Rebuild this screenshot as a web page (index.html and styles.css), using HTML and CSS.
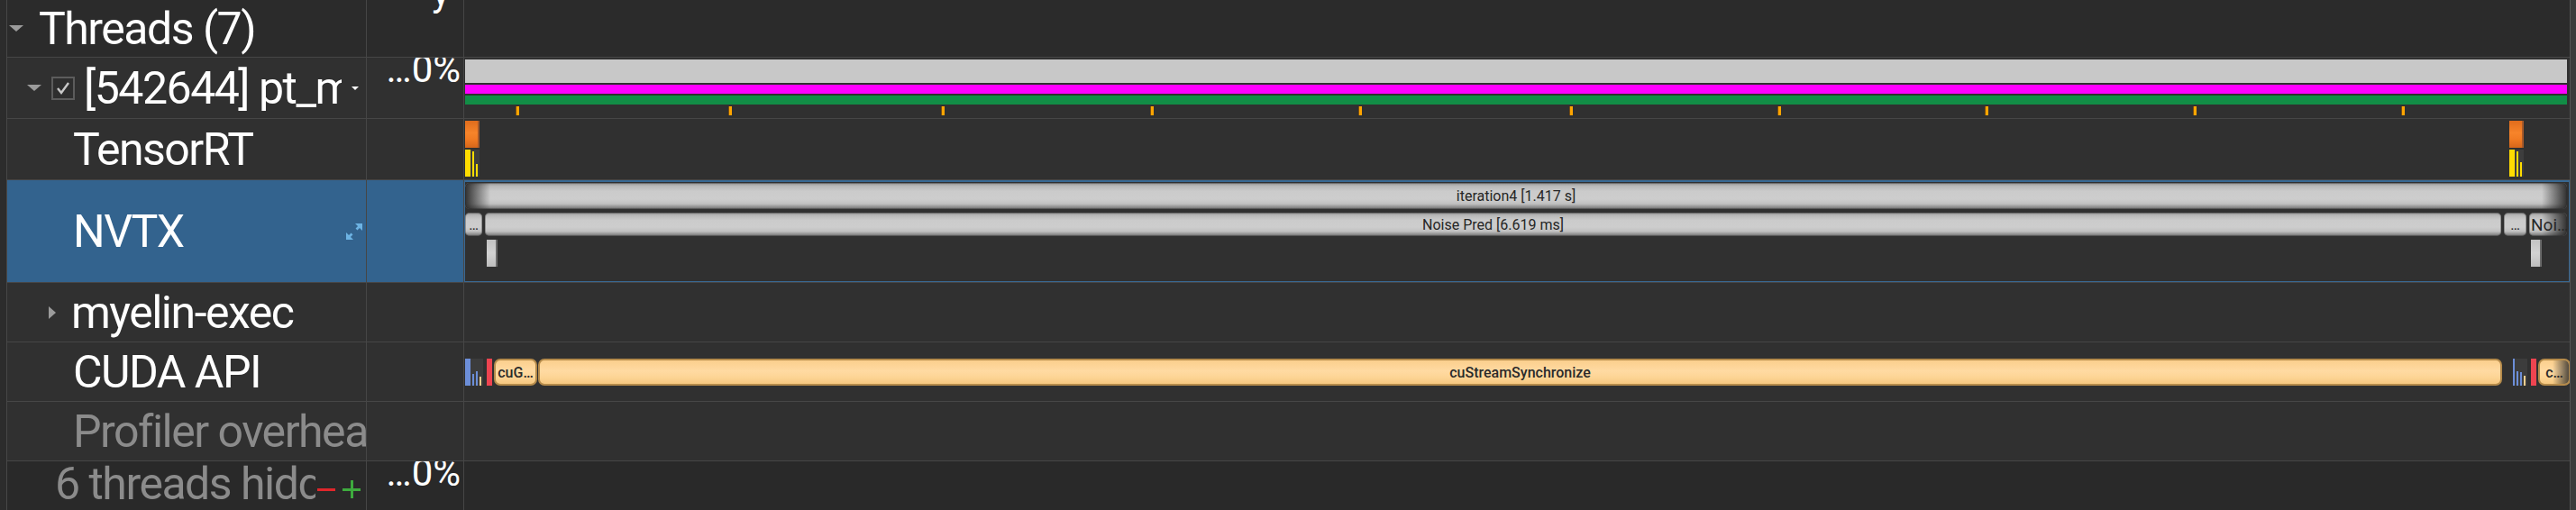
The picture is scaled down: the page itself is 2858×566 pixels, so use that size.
FILE: index.html
```html
<!DOCTYPE html>
<html>
<head>
<meta charset="utf-8">
<link rel="stylesheet" href="styles.css">
</head>
<body>
<div class="app">
  <div class="gutter"></div>
  <div class="table">

    <div class="row r-threads">
      <div class="name pad-threads"><span class="tri-down"></span><span class="label">Threads (7)</span></div>
      <div class="val"><span class="pct pct-y">y</span></div>
      <div class="tl"></div>
    </div>

    <div class="row r-pt">
      <div class="name pad-pt">
        <span class="tri-down"></span>
        <span class="check"><svg width="22" height="22" viewBox="0 0 22 22"><polyline points="5,11 9,16 17,5" fill="none" stroke="#c8c8c8" stroke-width="2.4"/></svg></span>
        <span class="label clip-pt">[542644] pt_main_thread</span>
        <span class="drop"></span>
      </div>
      <div class="val"><span class="pct">…0%</span></div>
      <div class="tl tl-pt">
        <div class="solid gray"></div>
        <div class="solid magenta"></div>
        <div class="solid green"></div>
        <div class="lane ticks">
          <span class="tick" style="left:57px"></span>
          <span class="tick" style="left:293px"></span>
          <span class="tick" style="left:529px"></span>
          <span class="tick" style="left:761px"></span>
          <span class="tick" style="left:992px"></span>
          <span class="tick" style="left:1226px"></span>
          <span class="tick" style="left:1457px"></span>
          <span class="tick" style="left:1687px"></span>
          <span class="tick" style="left:1918px"></span>
          <span class="tick" style="left:2149px"></span>
        </div>
      </div>
    </div>

    <div class="row r-trt">
      <div class="name pad-child"><span class="label">TensorRT</span></div>
      <div class="val"></div>
      <div class="tl tl-trt">
        <div class="lane h30">
          <span class="orange" style="left:1px"></span>
          <span class="orange" style="left:2269px"></span>
        </div>
        <div class="lane h30 gap2">
          <span class="ygroup" style="left:1px">
            <span class="yb" style="left:0;width:6px;height:30px"></span>
            <span class="yb" style="left:8px;width:2px;height:28px"></span>
            <span class="yb" style="left:12px;width:2px;height:14px"></span>
          </span>
          <span class="ygroup" style="left:2269px">
            <span class="yb" style="left:0;width:6px;height:30px"></span>
            <span class="yb" style="left:8px;width:2px;height:28px"></span>
            <span class="yb" style="left:12px;width:2px;height:16px"></span>
          </span>
        </div>
      </div>
    </div>

    <div class="row r-nvtx">
      <div class="name pad-child sel">
        <span class="label">NVTX</span>
        <svg class="expand" width="20" height="20" viewBox="0 0 20 20">
          <polygon points="11,1 19,1 19,9" fill="#6db3e3"/>
          <line x1="16" y1="4" x2="12.5" y2="7.5" stroke="#6db3e3" stroke-width="2.6"/>
          <polygon points="1,11 1,19 9,19" fill="#6db3e3"/>
          <line x1="4" y1="16" x2="7.5" y2="12.5" stroke="#6db3e3" stroke-width="2.6"/>
        </svg>
      </div>
      <div class="val sel"></div>
      <div class="tl tl-nvtx">
        <div class="lane h29">
          <span class="gbar fade-l fade-r" style="left:1px;width:2332px">iteration4 [1.417 s]</span>
        </div>
        <div class="lane h26 gap4">
          <span class="gbar" style="left:1px;width:19px">…</span>
          <span class="gbar" style="left:23px;width:2237px">Noise Pred [6.619 ms]</span>
          <span class="gbar" style="left:2263px;width:25px">…</span>
          <span class="gbar big fade-r" style="left:2291px;width:42px">Noi…</span>
        </div>
        <div class="lane h30 gap4">
          <span class="gsmall" style="left:25px"></span>
          <span class="gsmall" style="left:2293px"></span>
        </div>
      </div>
    </div>

    <div class="row r-myelin">
      <div class="name pad-myelin"><span class="tri-right"></span><span class="label">myelin-exec</span></div>
      <div class="val"></div>
      <div class="tl"></div>
    </div>

    <div class="row r-cuda">
      <div class="name pad-child"><span class="label">CUDA API</span></div>
      <div class="val"></div>
      <div class="tl tl-cuda">
        <div class="lane h30">
          <span class="blue" style="left:1px;width:6px"></span>
          <span class="dgroup" style="left:7px;width:14px">
            <span class="bb" style="left:2px;height:13px"></span>
            <span class="bb" style="left:6px;height:16px"></span>
            <span class="bt" style="left:10px;height:10px"></span>
          </span>
          <span class="red" style="left:25px"></span>
          <span class="tbar" style="left:33px;width:48px">cuG…</span>
          <span class="tbar" style="left:82px;width:2179px">cuStreamSynchronize</span>
          <span class="blue" style="left:2273px;width:2px"></span>
          <span class="dgroup" style="left:2275px;width:14px">
            <span class="bb" style="left:2px;height:16px"></span>
            <span class="bb" style="left:6px;height:15px"></span>
            <span class="bt" style="left:10px;height:11px"></span>
          </span>
          <span class="red" style="left:2293px"></span>
          <span class="tbar fade-r2" style="left:2301px;width:36px">c…</span>
        </div>
      </div>
    </div>

    <div class="row r-prof">
      <div class="name pad-child"><span class="label dim clip-prof">Profiler overhead</span></div>
      <div class="val"></div>
      <div class="tl"></div>
    </div>

    <div class="row r-hidden">
      <div class="name pad-hidden">
        <span class="label dim clip-hidden">6 threads hidden</span>
        <span class="minus"></span>
        <span class="plus"></span>
      </div>
      <div class="val"><span class="pct">…0%</span></div>
      <div class="tl"></div>
    </div>

  </div>
  <div class="scrollbar"></div>
</div>
</body>
</html>
```

FILE: styles.css
```css
* { box-sizing: border-box; }

html, body {
  margin: 0;
  padding: 0;
  background: #303030;
  overflow: hidden;
}

.app {
  display: flex;
  width: 2858px;
  height: 566px;
  overflow: hidden;
  font-family: Roboto, "Noto Sans", sans-serif;
}

.gutter {
  width: 8px;
  flex: none;
  background: #2c2c2c;
  border-right: 1px solid #474747;
}

.table {
  flex: 1;
  display: flex;
  flex-direction: column;
}

.scrollbar {
  width: 7px;
  flex: none;
  background: #3b3b3b;
  border-left: 1px solid #555;
}

.row {
  display: grid;
  grid-template-columns: 399px 108px 1fr;
  border-bottom: 1px solid #464646;
  background: #303030;
  flex: none;
}

.r-threads { height: 64px; background: #2b2b2b; }
.r-pt { height: 68px; }
.r-trt { height: 68px; }
.r-nvtx { height: 114px; }
.r-myelin { height: 66px; }
.r-cuda { height: 66px; }
.r-prof { height: 66px; }
.r-hidden { height: 70px; background: #292929; border-bottom: none; }

.name, .val {
  border-right: 1px solid #464646;
  overflow: hidden;
  position: relative;
}

.name {
  display: flex;
  align-items: center;
  white-space: nowrap;
}

.sel { background: #33638e; }

.label {
  color: #ffffff;
  font-size: 50px;
  letter-spacing: -1.5px;
  line-height: 1;
}

.dim { color: #8b8b8b; }

.pad-threads { padding-left: 2px; }
.pad-threads .label { margin-left: 17px; }
.pad-pt { padding-left: 22px; }
.pad-child { padding-left: 73px; }
.pad-myelin { padding-left: 46px; }
.pad-myelin .label { margin-left: 17px; }
.pad-hidden { padding-left: 53px; align-items: flex-start; }

.tri-down {
  width: 0;
  height: 0;
  border-left: 8px solid transparent;
  border-right: 8px solid transparent;
  border-top: 7px solid #9b9b9b;
  flex: none;
}

.tri-right {
  width: 0;
  height: 0;
  border-top: 7px solid transparent;
  border-bottom: 7px solid transparent;
  border-left: 8px solid #9b9b9b;
  flex: none;
}

.check {
  width: 26px;
  height: 26px;
  border: 2px solid #5c5c5c;
  background: #2e2e2e;
  margin-left: 11px;
  margin-right: 10px;
  display: flex;
  align-items: center;
  justify-content: center;
  flex: none;
}

.check svg { display: block; }

.clip-pt {
  width: 286px;
  overflow: hidden;
  flex: none;
}

.drop {
  margin-left: 11px;
  width: 0;
  height: 0;
  border-left: 4px solid transparent;
  border-right: 4px solid transparent;
  border-top: 4px solid #ffffff;
  flex: none;
}

.expand {
  margin-left: auto;
  margin-right: 3px;
  flex: none;
}

.clip-prof { flex: none; }

.clip-hidden {
  width: 289px;
  overflow: hidden;
  flex: none;
}

.minus {
  width: 20px;
  height: 3px;
  background: #e0262b;
  margin-left: 2px;
  margin-top: 30px;
  flex: none;
}

.plus {
  position: relative;
  width: 20px;
  height: 20px;
  margin-left: 8px;
  margin-top: 21px;
  flex: none;
}
.plus::before, .plus::after {
  content: "";
  position: absolute;
  background: #3eab3e;
}
.plus::before { left: 0; right: 0; top: 9px; height: 3px; }
.plus::after { top: 0; bottom: 0; left: 9px; width: 3px; }

.val {
  text-align: right;
  padding-right: 3px;
}

.pct {
  display: block;
  color: #ffffff;
  font-size: 42px;
  line-height: 1;
  margin-top: -8px;
}

.pct-y {
  margin-top: -29px;
  padding-right: 12px;
}

/* timeline */
.tl {
  position: relative;
  overflow: hidden;
}

.lane {
  position: relative;
  margin: 0 3px 0 1px;
}

.h26 { height: 26px; }
.h29 { height: 29px; }
.h30 { height: 30px; }
.gap2 { margin-top: 2px; }
.gap4 { margin-top: 4px; }

.tl-pt { padding-top: 2px; }
.solid { margin: 0 3px 0 1px; }
.gray { height: 26px; background: #c8c8c8; }
.magenta { height: 10px; margin-top: 2px; background: #ff00ff; }
.green { height: 10px; margin-top: 2px; background: #128d46; }
.ticks { height: 10px; margin-top: 2px; margin-left: 0; }

.tick {
  position: absolute;
  top: 0;
  width: 4px;
  height: 10px;
  background: #ffa500;
  border-left: 1px solid #7a4e10;
}

.tl-trt { padding-top: 2px; }
.tl-trt .lane { margin-left: 0; }

.orange {
  position: absolute;
  top: 0;
  width: 16px;
  height: 30px;
  background: linear-gradient(to bottom, #e06c1c, #f7842a 45%, #f07a22 70%, #d6661a);
  border-right: 2px solid #a6592a;
}

.ygroup {
  position: absolute;
  top: 0;
  width: 16px;
  height: 30px;
  background: #3d3d3d;
}

.yb {
  position: absolute;
  bottom: 0;
  background: #ffdc00;
}

.tl-nvtx {
  padding-top: 3px;
  box-shadow: inset 0 0 0 1px #386893, inset 0 1px 0 1px #386893;
}
.tl-nvtx .lane { margin-left: 0; }

.gbar {
  position: absolute;
  top: 0;
  bottom: 0;
  border-radius: 5px;
  background: linear-gradient(to bottom, #8e8e8e 0%, #b9b9b9 12%, #cbcbcb 32%, #cdcdcd 62%, #c0c0c0 80%, #939393 91%, #6c6c6c 100%);
  box-shadow: inset 0 0 0 1px rgba(40, 40, 40, 0.35);
  color: #262626;
  font-size: 16px;
  display: flex;
  align-items: center;
  justify-content: center;
  white-space: nowrap;
  overflow: hidden;
}

.gbar.big { font-size: 19px; justify-content: flex-start; padding-left: 2px; }

.fade-l::before,
.fade-r::after,
.fade-r2::after {
  content: "";
  position: absolute;
  top: 0;
  bottom: 0;
  width: 28px;
}
.fade-l::before { left: 0; background: linear-gradient(to right, rgba(40, 40, 40, 0.95), rgba(40, 40, 40, 0)); }
.fade-r::after { right: 0; background: linear-gradient(to left, rgba(40, 40, 40, 0.95), rgba(40, 40, 40, 0)); }
.fade-r2::after { right: 0; width: 18px; background: linear-gradient(to left, rgba(40, 40, 40, 0.8), rgba(40, 40, 40, 0)); }

.gsmall {
  position: absolute;
  top: 0;
  width: 12px;
  height: 30px;
  background: linear-gradient(to bottom, #c2c2c2, #d2d2d2 50%, #bdbdbd);
  border-right: 2px solid #6a6a6a;
}

.tl-cuda { padding-top: 18px; }
.tl-cuda .lane { margin-left: 0; }

.blue {
  position: absolute;
  top: 0;
  height: 30px;
  background: #6c8ed8;
}

.dgroup {
  position: absolute;
  top: 0;
  height: 30px;
  background: #3c3c3c;
}

.bb, .bt {
  position: absolute;
  bottom: 0;
  width: 2px;
}
.bb { background: #6c8ed8; }
.bt { background: #f1cf8f; }

.red {
  position: absolute;
  top: 0;
  width: 6px;
  height: 30px;
  background: #ee4450;
}

.tbar {
  position: absolute;
  top: 0;
  height: 30px;
  border: 2px solid #b58b4b;
  border-radius: 7px;
  background: linear-gradient(to bottom, #fbcf8d, #ffdaa2 45%, #fdd596 70%, #f6c880);
  color: #2a2a2a;
  font-size: 16px;
  font-weight: 500;
  display: flex;
  align-items: center;
  justify-content: center;
  white-space: nowrap;
  overflow: hidden;
}
```
